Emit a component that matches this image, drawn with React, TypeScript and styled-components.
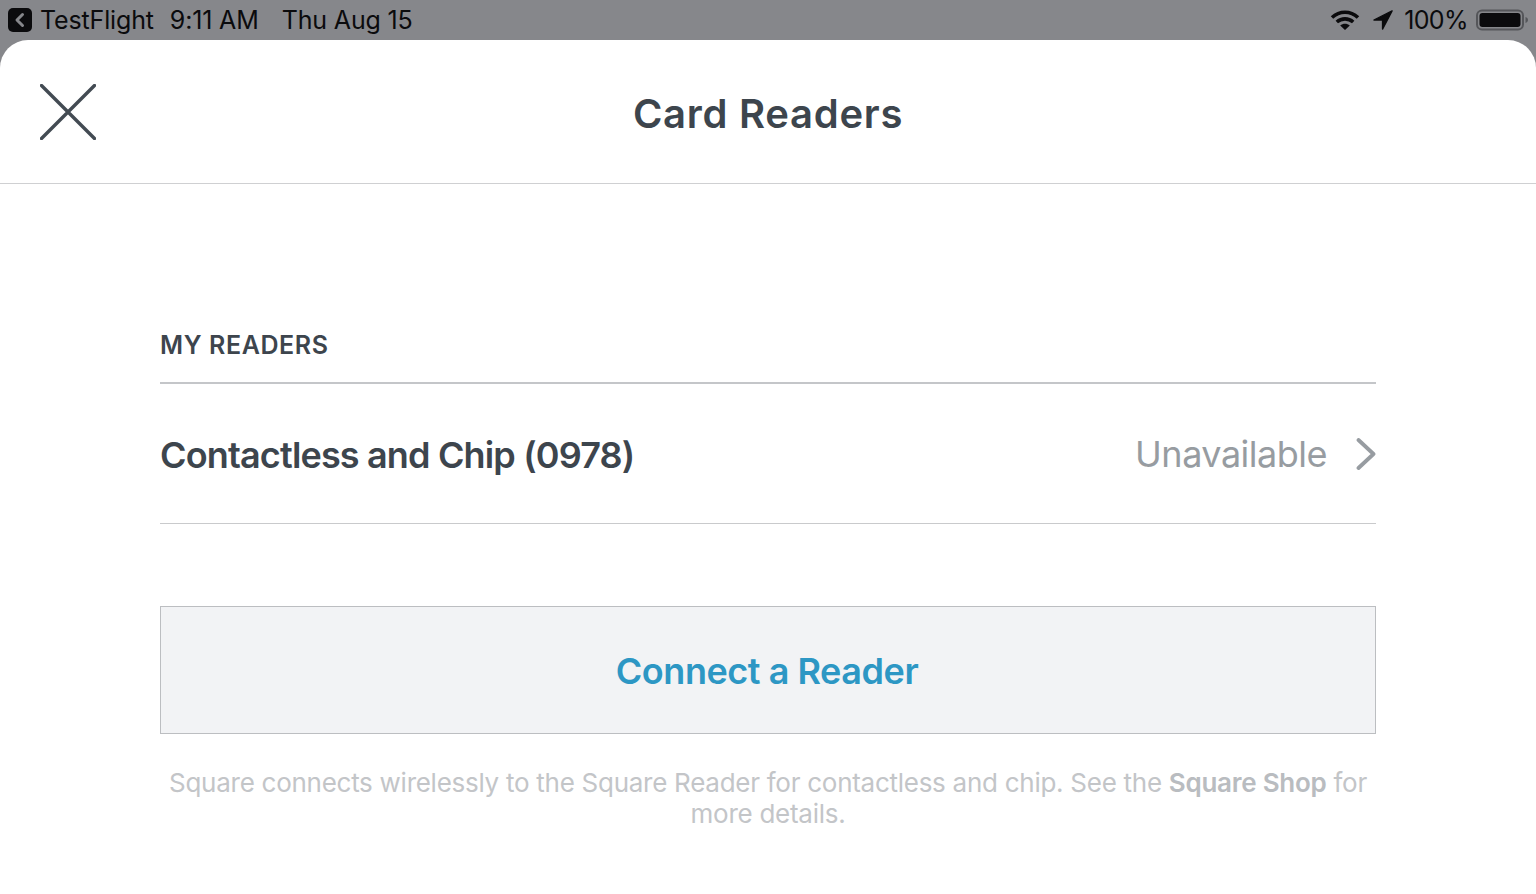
import React from "react";
import styled, { createGlobalStyle } from "styled-components";

const Global = createGlobalStyle`
  html, body { margin: 0; padding: 0; background: #86878b; }
  #root { width: 1536px; height: 894px; overflow: hidden; }
`;

const Page = styled.div`
  width: 1536px;
  height: 894px;
  display: flex;
  flex-direction: column;
  background: #86878b;
  font-family: "Inter", "Liberation Sans", sans-serif;
`;

const StatusBar = styled.div`
  height: 40px;
  flex: none;
  display: flex;
  align-items: center;
  justify-content: space-between;
  padding: 0 8px;
  font-size: 25px;
  letter-spacing: -0.15px;
  line-height: 41px;
  color: #0b0b0d;
`;

const StatusGroup = styled.div`
  display: flex;
  align-items: center;
`;

const StatusText = styled.span<{ $left?: number; $tight?: boolean }>`
  margin-left: ${(p) => p.$left ?? 0}px;
  white-space: nowrap;
  ${(p) => (p.$tight ? "letter-spacing: -0.6px;" : "")}
`;

const Sheet = styled.main`
  flex: 1;
  display: flex;
  flex-direction: column;
  background: #fff;
  border-radius: 28px 28px 0 0;
`;

const Header = styled.header`
  height: 143px;
  flex: none;
  position: relative;
  display: flex;
  align-items: center;
  justify-content: center;
  border-bottom: 1px solid #cfd0d2;
`;

const CloseButton = styled.button`
  position: absolute;
  left: 40px;
  top: 44px;
  width: 56px;
  height: 56px;
  padding: 0;
  border: 0;
  background: none;
  display: block;
`;

const Title = styled.h1`
  margin: 4px 0 0;
  font-size: 40px;
  line-height: 50px;
  font-weight: 600;
  letter-spacing: 0.72px;
  color: #3d454d;
`;

const Content = styled.section`
  padding: 138px 160px 0;
  display: flex;
  flex-direction: column;
`;

const SectionLabel = styled.h2`
  margin: 0;
  height: 62px;
  box-sizing: border-box;
  font-size: 25px;
  line-height: 46px;
  font-weight: 600;
  letter-spacing: 0.6px;
  color: #3d454d;
  border-bottom: 2px solid #c4c6c9;
`;

const ReaderRow = styled.div`
  height: 139px;
  display: flex;
  align-items: center;
  justify-content: space-between;
  border-bottom: 1px solid #c9cacc;
`;

const ReaderName = styled.span`
  font-size: 36px;
  line-height: 44px;
  padding-top: 2px;
  font-weight: 600;
  letter-spacing: -0.84px;
  color: #3d454d;
`;

const ReaderStatus = styled.div`
  display: flex;
  align-items: center;
  gap: 29px;
  font-size: 36px;
  line-height: 44px;
  padding-top: 1px;
  letter-spacing: -0.5px;
  color: #979ca1;
`;

const ConnectButton = styled.button`
  margin-top: 82px;
  height: 128px;
  border: 1px solid #bcbec1;
  background: #f2f3f5;
  color: #2d97c4;
  font-family: inherit;
  font-size: 36px;
  font-weight: 600;
  letter-spacing: -0.45px;
  padding: 2px 2px 0 0;
`;

const Note = styled.p`
  margin: 33px 0 0;
  text-align: center;
  font-size: 26px;
  line-height: 31px;
  letter-spacing: -0.27px;
  color: #c3c5c8;
`;

const NoteLink = styled.strong`
  font-weight: 600;
  color: #b9bcc0;
`;

export default function App() {
  return (
    <Page>
      <Global />
      <StatusBar>
        <StatusGroup>
          <svg width="24" height="24" viewBox="0 0 24 24">
            <rect width="24" height="24" rx="5" fill="#0b0b0d" />
            <path d="M14.5 6.5 9 12l5.5 5.5" fill="none" stroke="#86878b" strokeWidth="3" strokeLinecap="round" strokeLinejoin="round" />
          </svg>
          <StatusText $left={8}>TestFlight</StatusText>
          <StatusText $left={16}>9:11 AM</StatusText>
          <StatusText $left={23}>Thu Aug 15</StatusText>
        </StatusGroup>
        <StatusGroup>
          <svg width="30" height="22" viewBox="0 0 30 22">
            <path d="M2 8.5C9.5 1.5 20.5 1.5 28 8.5" fill="none" stroke="#0b0b0d" strokeWidth="3.6" />
            <path d="M6.8 13C11.5 8.8 18.5 8.8 23.2 13" fill="none" stroke="#0b0b0d" strokeWidth="3.6" />
            <path d="M10.2 16.4 15 21l4.8-4.6c-2.8-2.3-6.8-2.3-9.6 0Z" fill="#0b0b0d" />
          </svg>
          <StatusText $left={13} as="span">
            <svg width="20" height="22" viewBox="0 0 22 24" style={{ display: "block" }}>
              <path d="M21 2 1 12h9.5V22Z" fill="#0b0b0d" stroke="#0b0b0d" strokeWidth="1.5" strokeLinejoin="round" />
            </svg>
          </StatusText>
          <StatusText $left={11} $tight>100%</StatusText>
          <StatusText $left={8} as="span">
            <svg width="52" height="22" viewBox="0 0 52 22" style={{ display: "block" }}>
              <rect x="1" y="1.5" width="46" height="19" rx="5" fill="none" stroke="#55565a" strokeWidth="2" />
              <rect x="3.5" y="4" width="41" height="14" rx="3" fill="#0b0b0d" />
              <path d="M49.5 8c1.5.4 2.5 1.6 2.5 3s-1 2.6-2.5 3Z" fill="#55565a" />
            </svg>
          </StatusText>
        </StatusGroup>
      </StatusBar>
      <Sheet>
        <Header>
          <CloseButton aria-label="Close">
            <svg width="56" height="56" viewBox="0 0 56 56" style={{ display: "block" }}>
              <path d="M1.5 1.5 54.5 54.5M54.5 1.5 1.5 54.5" fill="none" stroke="#434b53" strokeWidth="3.4" strokeLinecap="round" />
            </svg>
          </CloseButton>
          <Title>Card Readers</Title>
        </Header>
        <Content>
          <SectionLabel>MY READERS</SectionLabel>
          <ReaderRow>
            <ReaderName>Contactless and Chip (0978)</ReaderName>
            <ReaderStatus>
              Unavailable
              <svg width="20" height="32" viewBox="0 0 20 32" style={{ display: "block" }}>
                <path d="M2.5 2l15 14-15 14" fill="none" stroke="#979ca1" strokeWidth="3.8" strokeLinecap="round" strokeLinejoin="round" />
              </svg>
            </ReaderStatus>
          </ReaderRow>
          <ConnectButton>Connect a Reader</ConnectButton>
          <Note>
            Square connects wirelessly to the Square Reader for contactless and chip. See the <NoteLink>Square Shop</NoteLink> for more details.
          </Note>
        </Content>
      </Sheet>
    </Page>
  );
}
